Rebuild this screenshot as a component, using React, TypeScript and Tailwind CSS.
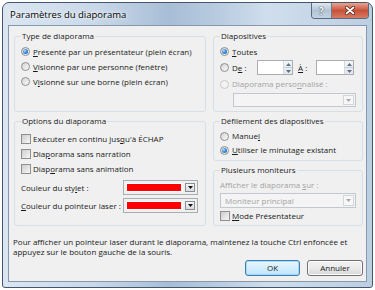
import React from 'react';

function Radio({ checked, disabled }: { checked?: boolean; disabled?: boolean }) {
  return (
    <span
      className={`flex h-[9px] w-[9px] shrink-0 items-center justify-center rounded-full border ${
        disabled ? 'border-[#cacaca] bg-[#f3f3f3]' : 'border-[#8e8f8f] bg-linear-to-br from-[#d4d4d4] to-[#fbfbfb]'
      }`}
    >
      {checked && (
        <span className="h-[5px] w-[5px] rounded-full bg-[radial-gradient(circle_at_35%_35%,#b6e0ff_0%,#3a8ee0_45%,#15539e_100%)]" />
      )}
    </span>
  );
}

function Check() {
  return (
    <span className="flex h-[10px] w-[10px] shrink-0 items-center justify-center border border-[#8e8f8f] bg-white">
      <span className="h-[8px] w-[8px] bg-linear-to-br from-[#cdcdcd] to-[#f7f7f7]" />
    </span>
  );
}

function Arrow({ up, color = '#4d4d4d' }: { up?: boolean; color?: string }) {
  return (
    <svg width="5" height="3" viewBox="0 0 5 3">
      <path d={up ? 'M0 3 L2.5 0 L5 3 Z' : 'M0 0 L5 0 L2.5 3 Z'} fill={color} />
    </svg>
  );
}

function Spin({ className }: { className: string }) {
  return (
    <div className={`flex h-[15px] border border-[#abadb3] bg-white ${className}`}>
      <div className="flex-1" />
      <div className="flex w-[9px] flex-col border-l border-[#d5d9de] bg-linear-to-b from-[#f3f6f9] to-[#e1e7ee]">
        <div className="flex flex-1 items-center justify-center border-b border-[#c5ccd4]">
          <Arrow up color="#5d6f86" />
        </div>
        <div className="flex flex-1 items-center justify-center">
          <Arrow color="#5d6f86" />
        </div>
      </div>
    </div>
  );
}

function Combo({ className, text }: { className: string; text?: string }) {
  return (
    <div className={`flex border border-[#c3c8ce] bg-[#f4f4f4] ${className}`}>
      <div className="flex flex-1 items-center pl-[4px] text-[#a3a3a3]">{text}</div>
      <div className="m-[1px] flex w-[11px] items-center justify-center border border-[#d2d6db] bg-[#f7f7f7]">
        <Arrow color="#a8a8a8" />
      </div>
    </div>
  );
}

function ColorPicker() {
  return (
    <div className="flex h-[15px] w-[75px] border border-[#a9aeb5] bg-[#f0f0f0] p-[2px]">
      <div className="flex flex-1 border border-[#ffffff] pr-[1px]">
        <div className="flex-1 bg-[#ff0000]" />
      </div>
      <div className="ml-[2px] flex w-[10px] items-center justify-center border border-[#8a8f96] bg-linear-to-b from-[#f6f6f6] to-[#dcdcdc]">
        <Arrow color="#111" />
      </div>
    </div>
  );
}

function Group({ title, className, children }: { title: string; className: string; children: React.ReactNode }) {
  return (
    <div className={`relative rounded-[3px] border border-[#d5dfe5] ${className}`}>
      <span className="absolute -top-[6px] left-[6px] bg-[#f0f0f0] px-[1px] leading-[10px]">{title}</span>
      {children}
    </div>
  );
}

export default function App() {
  return (
    <div className="h-[290px] w-[375px] bg-white pl-[2px] pt-[2px] font-['Open_Sans',sans-serif] text-[8px] leading-none text-[#1a1a1a]">
      <div className="flex h-[286px] w-[371px] flex-col rounded-t-[7px] rounded-b-[3px] border border-[#44566b] bg-[linear-gradient(90deg,#dbe6f2_0%,#c9d8e9_25%,#a8bed6_45%,#b8cbe0_58%,#d0deec_72%,#bccee2_100%)]">
        {/* title bar */}
        <div className="flex h-[22px] shrink-0 items-start justify-between pl-[7px] pr-[3px]">
          <span className="mt-[7px] text-[9.5px] leading-[10px] text-black [text-shadow:0_0_6px_#ffffff,0_0_3px_#ffffff]">
            Paramètres du diaporama
          </span>
          <div className="flex overflow-hidden rounded-b-[4px] border border-t-0 border-[#5b6b7e]">
            <div className="flex h-[15px] w-[20px] items-center justify-center border-r border-[#6c7c8f] bg-linear-to-b from-[#dfe7f0] via-[#b3c3d6] to-[#c4d3e3] text-[10px] font-bold text-white [text-shadow:0_0_1px_#2a3a4e,0_0_1px_#2a3a4e]">
              ?
            </div>
            <div className="flex h-[15px] w-[36px] items-center justify-center bg-linear-to-b from-[#e8a493] via-[#c7513a] to-[#d77a62]">
              <svg width="10" height="9" viewBox="0 0 10 9">
                <path d="M1.5 1.5 L8.5 7.5 M8.5 1.5 L1.5 7.5" stroke="#4a1a12" strokeWidth="3.2" strokeLinecap="round" />
                <path d="M1.5 1.5 L8.5 7.5 M8.5 1.5 L1.5 7.5" stroke="#ffffff" strokeWidth="1.8" strokeLinecap="round" />
              </svg>
            </div>
          </div>
        </div>

        {/* client area */}
        <div className="mx-[5px] flex h-[257px] shrink-0 flex-col border border-[#8598ae] bg-[#f0f0f0] pl-[4px] pr-[3px] pt-[10px]">
          <div className="flex gap-[7px] pl-[1px]">
            {/* left column */}
            <div className="flex w-[192px] flex-col gap-[9px]">
              <Group title="Type de diaporama" className="h-[76px] pl-[6px] pt-[7px]">
                <div className="flex h-[15px] items-center gap-[3px]">
                  <Radio checked />
                  <span>
                    <u>P</u>résenté par un présentateur (plein écran)
                  </span>
                </div>
                <div className="flex h-[15px] items-center gap-[3px]">
                  <Radio />
                  <span>
                    <u>V</u>isionné par une personne (fenêtre)
                  </span>
                </div>
                <div className="flex h-[15px] items-center gap-[3px]">
                  <Radio />
                  <span>
                    V<u>i</u>sionné sur une borne (plein écran)
                  </span>
                </div>
              </Group>

              <Group title="Options du diaporama" className="h-[105px] pl-[6px] pt-[9px]">
                <div className="flex h-[15px] items-center gap-[2px]">
                  <Check />
                  <span>
                    Exécuter en continu jus<u>q</u>u'à ÉCHAP
                  </span>
                </div>
                <div className="flex h-[15px] items-center gap-[2px]">
                  <Check />
                  <span>
                    Dia<u>p</u>orama sans narration
                  </span>
                </div>
                <div className="flex h-[15px] items-center gap-[2px]">
                  <Check />
                  <span>
                    Diap<u>o</u>rama sans animation
                  </span>
                </div>
                <div className="mt-[4px] flex items-center">
                  <span className="w-[102px]">
                    Couleur du sty<u>l</u>et :
                  </span>
                  <ColorPicker />
                </div>
                <div className="mt-[3px] flex items-center">
                  <span className="w-[102px]">
                    <u>C</u>ouleur du pointeur laser :
                  </span>
                  <ColorPicker />
                </div>
              </Group>
            </div>

            {/* right column */}
            <div className="flex w-[150px] flex-col">
              <Group title="Diapositives" className="h-[76px] pl-[6px] pt-[7px]">
                <div className="flex h-[15px] items-center gap-[3px]">
                  <Radio checked />
                  <span>
                    <u>T</u>outes
                  </span>
                </div>
                <div className="flex h-[17px] items-center">
                  <div className="flex w-[37px] items-center gap-[3px]">
                    <Radio />
                    <span>
                      D<u>e</u> :
                    </span>
                  </div>
                  <Spin className="w-[36px]" />
                  <span className="ml-[5px] w-[18px]">
                    <u>À</u> :
                  </span>
                  <Spin className="w-[38px]" />
                </div>
                <div className="flex h-[16px] items-center gap-[3px] text-[#a3a3a3]">
                  <Radio disabled />
                  <span>Diaporama perso<u>n</u>nalisé :</span>
                </div>
                <Combo className="ml-[13px] mt-[1px] h-[14px] w-[123px]" />
              </Group>

              <Group title="Défilement des diapositives" className="mt-[9px] h-[40px] pl-[6px] pt-[7px]">
                <div className="flex h-[14px] items-center gap-[3px]">
                  <Radio />
                  <span>
                    Manue<u>l</u>
                  </span>
                </div>
                <div className="flex h-[14px] items-center gap-[3px]">
                  <Radio checked />
                  <span>
                    <u>U</u>tiliser le minutage existant
                  </span>
                </div>
              </Group>

              <Group title="Plusieurs moniteurs" className="mt-[9px] h-[56px] pl-[6px] pr-[6px] pt-[7px]">
                <div className="flex h-[13px] items-center text-[#a3a3a3]">
                  <span>
                    Afficher le diaporama <u>s</u>ur :
                  </span>
                </div>
                <Combo className="mt-[2px] h-[15px] w-[136px]" text="Moniteur principal" />
                <div className="mt-[1px] flex h-[14px] items-center gap-[2px]">
                  <Check />
                  <span>
                    <u>M</u>ode Présentateur
                  </span>
                </div>
              </Group>
            </div>
          </div>

          {/* footer */}
          <p className="mt-[11px] leading-[10px]">
            Pour afficher un pointeur laser durant le diaporama, maintenez la touche Ctrl enfoncée et
            <br />
            appuyez sur le bouton gauche de la souris.
          </p>
          <div className="mt-[3px] flex justify-end gap-[7px]">
            <button className="flex h-[16px] w-[55px] items-center justify-center rounded-[3px] border border-[#3c7fb1] bg-linear-to-b from-[#eaf6fd] to-[#bee6fd] shadow-[inset_0_0_0_1px_#a7d8f5]">
              OK
            </button>
            <button className="flex h-[16px] w-[56px] items-center justify-center rounded-[3px] border border-[#707070] bg-linear-to-b from-[#f2f2f2] via-[#ebebeb] to-[#d6d6d6] shadow-[inset_0_0_0_1px_#fcfcfc]">
              Annuler
            </button>
          </div>
        </div>
      </div>
    </div>
  );
}
